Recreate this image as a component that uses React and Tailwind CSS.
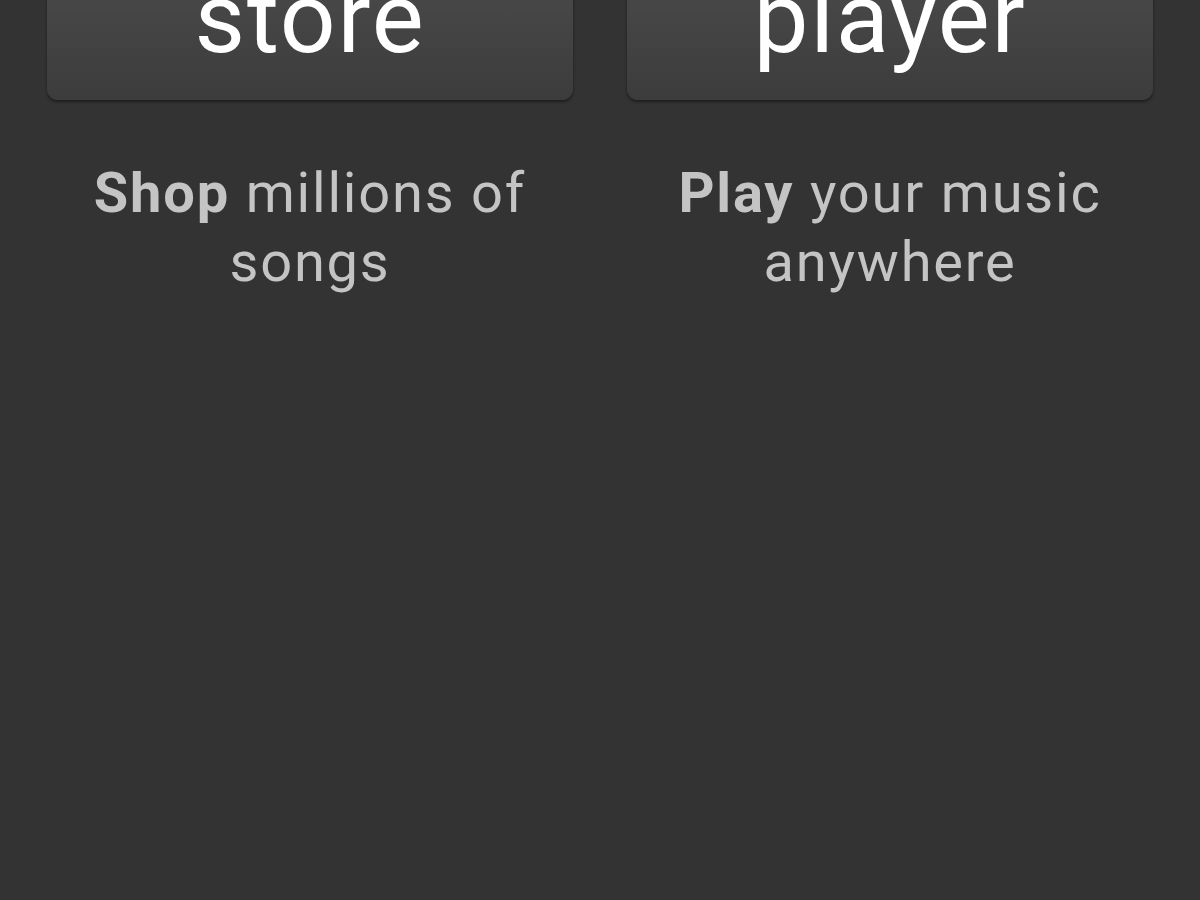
const cards = [
  { label: "store", bold: "Shop", rest: " millions of songs" },
  { label: "player", bold: "Play", rest: " your music anywhere" },
];

export default function App() {
  return (
    <div
      className="min-h-[900px] w-full overflow-hidden bg-[#333333]"
      style={{ fontFamily: "Roboto, 'Noto Sans', sans-serif" }}
    >
      <div className="grid grid-cols-2 gap-[54px] px-[47px]">
        {cards.map((c) => (
          <div key={c.label} className="flex flex-col items-center">
            {/* Big button, top cut off by the viewport */}
            <button className="-mt-[62px] flex h-[162px] w-full items-center justify-center rounded-[11px] bg-gradient-to-b from-[#4e4e4e] to-[#3c3c3c] text-[98px] leading-[96px] tracking-[1.8px] text-white shadow-[0_2px_3px_rgba(0,0,0,0.45)]">
              {c.label}
            </button>

            {/* Caption */}
            <p className="mt-[59px] w-[470px] text-center text-[56px] leading-[69px] tracking-[1.8px] text-[#c4c4c4]">
              <span className="font-bold">{c.bold}</span>
              {c.rest}
            </p>
          </div>
        ))}
      </div>
    </div>
  );
}
